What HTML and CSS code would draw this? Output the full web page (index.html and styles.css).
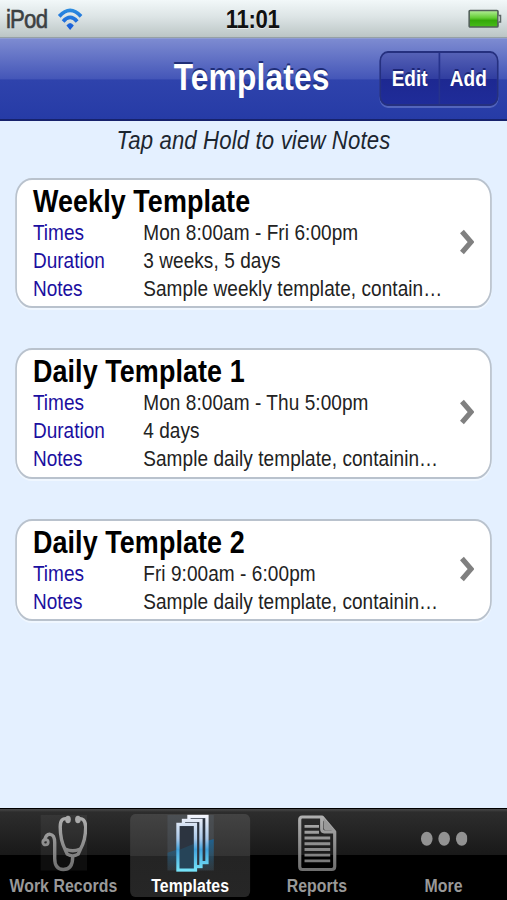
FILE: index.html
```html
<!DOCTYPE html>
<html lang="en">
<head>
<meta charset="utf-8">
<title>Templates</title>
<link rel="stylesheet" href="styles.css">
</head>
<body>
<div class="viewport">
<div class="screen">
  <header class="status">
    <div class="carrier">
      <span>iPod</span>
      <svg class="wifi" viewBox="0 0 26 22" preserveAspectRatio="none">
        <defs><linearGradient id="wf" x1="0" y1="0" x2="0" y2="22" gradientUnits="userSpaceOnUse"><stop offset="0" stop-color="#2d8fe0"/><stop offset="1" stop-color="#1557d8"/></linearGradient></defs>
        <g fill="none" stroke="url(#wf)" stroke-width="3.8"><path d="M1.8 8.4Q13 -3.6 24.2 8.4"/><path d="M5.8 13.4Q13 5.4 20.2 13.4"/></g>
        <path fill="url(#wf)" d="M9.2 17.6Q13 12.4 16.8 17.6L13 22Z"/>
      </svg>
    </div>
    <span class="clock">11:01</span>
    <div class="power"><svg class="battery" viewBox="0 0 34 20" preserveAspectRatio="none">
      <defs><linearGradient id="bt" x1="0" y1="0" x2="0" y2="1"><stop offset="0" stop-color="#b5ef9a"/><stop offset=".45" stop-color="#62cc33"/><stop offset=".6" stop-color="#35a80a"/><stop offset="1" stop-color="#48bd1a"/></linearGradient></defs>
      <rect x="1" y="1.5" width="29" height="16.5" rx="1" fill="url(#bt)" stroke="#53605a" stroke-width="1.7"/>
      <path d="M30.500 6.500h2.200v6.500h-2.200" fill="#b9c1c0" stroke="#5d6867" stroke-width="1.3"/>
    </svg></div>
  </header>

  <nav class="navbar">
    <h1>Templates</h1>
    <div class="actions"><button>Edit</button><button>Add</button></div>
  </nav>

  <main class="content">
    <p class="hint">Tap and Hold to view Notes</p>
    <section class="card">
      <div class="details">
        <h2>Weekly Template</h2>
        <dl>
          <dt>Times</dt><dd>Mon 8:00am - Fri 6:00pm</dd>
          <dt>Duration</dt><dd>3 weeks, 5 days</dd>
          <dt>Notes</dt><dd>Sample weekly template, contain…</dd>
        </dl>
      </div>
      <svg class="chevron" viewBox="0 0 15 26" preserveAspectRatio="none"><path d="M2.300 2.500L11.500 13L2.300 23.500" fill="none" stroke="#808080" stroke-width="5.200"/></svg>
    </section>
    <section class="card">
      <div class="details">
        <h2>Daily Template 1</h2>
        <dl>
          <dt>Times</dt><dd>Mon 8:00am - Thu 5:00pm</dd>
          <dt>Duration</dt><dd>4 days</dd>
          <dt>Notes</dt><dd>Sample daily template, containin…</dd>
        </dl>
      </div>
      <svg class="chevron" viewBox="0 0 15 26" preserveAspectRatio="none"><path d="M2.300 2.500L11.500 13L2.300 23.500" fill="none" stroke="#808080" stroke-width="5.200"/></svg>
    </section>
    <section class="card">
      <div class="details">
        <h2>Daily Template 2</h2>
        <dl>
          <dt>Times</dt><dd>Fri 9:00am - 6:00pm</dd>
          <dt>Notes</dt><dd>Sample daily template, containin…</dd>
        </dl>
      </div>
      <svg class="chevron" viewBox="0 0 15 26" preserveAspectRatio="none"><path d="M2.300 2.500L11.500 13L2.300 23.500" fill="none" stroke="#808080" stroke-width="5.200"/></svg>
    </section>
  </main>

  <footer class="tabbar">
    <div class="tab">
      <svg class="icon" viewBox="0 0 48 60" preserveAspectRatio="none">
        <defs><linearGradient id="gr" x1="0" y1="0" x2="0" y2="60" gradientUnits="userSpaceOnUse"><stop offset="0" stop-color="#b4b4b4"/><stop offset="1" stop-color="#6c6c6c"/></linearGradient></defs>
        <rect x="1" y="2" width="47" height="56" fill="#fff" opacity=".055"/>
        <g fill="none" stroke="url(#gr)" stroke-width="3.4" stroke-linecap="round">
          <path d="M28 6Q20.500 4 20.500 14Q20.500 27 25.500 37L27.500 41.500Q33 45 38.500 41.500L40.500 37Q46 27 46 14Q45.500 4 38 6"/>
          <path d="M26 36.500Q33 39.500 40 36.500"/>
          <path d="M33 44Q33 57 23.500 57Q15 57 15 46V30Q15 22 10.500 21.500Q6.500 21 5 27"/>
          <circle cx="5.800" cy="29.500" r="2.700" stroke-width="2.800"/>
        </g>
        <g fill="#aaa"><ellipse cx="28.300" cy="6.500" rx="2.800" ry="3.800"/><ellipse cx="38.200" cy="6.500" rx="2.800" ry="3.800"/></g>
      </svg>
      <span>Work Records</span>
    </div>
    <div class="tab selected">
      <svg class="icon" viewBox="0 0 48 60" preserveAspectRatio="none">
        <defs>
          <linearGradient id="bl" x1="0" y1="2" x2="0" y2="58" gradientUnits="userSpaceOnUse"><stop offset="0" stop-color="#f4f5fc"/><stop offset=".43" stop-color="#aac8e8"/><stop offset=".62" stop-color="#43a4dd"/><stop offset="1" stop-color="#75e3f8"/></linearGradient>
          <linearGradient id="bg" x1="0" y1="25" x2="0" y2="58" gradientUnits="userSpaceOnUse"><stop offset="0" stop-color="#126ba9" stop-opacity=".75"/><stop offset="1" stop-color="#17668d" stop-opacity=".05"/></linearGradient>
        </defs>
        <rect x="1" y="2" width="47" height="56" fill="#8eabc9" opacity=".13"/>
        <path d="M1 40Q22 33 48 26V58H1Z" fill="url(#bg)"/>
        <g fill="#2c3440" stroke="url(#bl)" stroke-width="3.300">
          <rect x="22.500" y="3.500" width="18" height="46.500"/>
          <rect x="17" y="7.500" width="17.500" height="46.500"/>
          <rect x="11.500" y="11.500" width="17.500" height="46"/>
        </g>
        <path d="M13 37L27.500 31V56H13Z" fill="#1e6487" opacity=".35"/>
      </svg>
      <span>Templates</span>
    </div>
    <div class="tab">
      <svg class="icon" viewBox="0 0 48 60" preserveAspectRatio="none">
        <g fill="none" stroke="url(#gr)" stroke-width="3.200" stroke-linejoin="round">
          <path d="M9 4H29L41.500 19V54Q41.500 57 38.500 57H9Q6.500 57 6.500 54V7Q6.500 4 9 4Z"/>
          <path d="M28.500 4V16Q28.500 19 31 19H41.500"/>
        </g>
        <path d="M30.500 5L41 17.500H33Q30.500 17.500 30.500 15Z" fill="#999"/>
        <g fill="url(#gr)"><path d="M11.300 12h14.500v2.800h-14.500zM11.300 18h14.500v2.800h-14.500zM11.300 23.800H37v2.800H11.300zM11.300 29.600H37v2.800H11.300zM11.300 35.400H37v2.800H11.300zM11.300 41.100H37v2.800H11.300zM11.300 46.900H37v2.800H11.300z"/></g>
      </svg>
      <span>Reports</span>
    </div>
    <div class="tab">
      <svg class="icon" viewBox="0 0 48 60" preserveAspectRatio="none"><g fill="#929292"><ellipse cx="6.800" cy="26" rx="5.800" ry="7"/><ellipse cx="24.200" cy="26" rx="5.800" ry="7"/><ellipse cx="41.800" cy="26" rx="5.800" ry="7"/></g></svg>
      <span>More</span>
    </div>
  </footer>
</div>
</div>
</body>
</html>
```
FILE: styles.css
```css
* { box-sizing: border-box; margin: 0; padding: 0; }
body { background: #e4f0ff; }
.viewport { width: 100%; height: 900px; overflow: hidden; }

.screen {
  width: 600px;
  height: 900px;
  transform: scaleX(.845);
  transform-origin: 0 0;
  display: flex;
  flex-direction: column;
  background: #e4f0ff;
  font-family: "Liberation Sans", Arial, Helvetica, sans-serif;
  color: #222;
}

.status {
  height: 38px;
  flex: none;
  display: grid;
  grid-template-columns: 1fr auto 1fr;
  align-items: center;
  padding: 0 6px 0 7px;
  background: linear-gradient(#f2f8f9, #dce4e5 45%, #bcc6c6 96%, #828e96);
  font-size: 26.25px;
  line-height: 36px;
}
.carrier { display: flex; align-items: center; gap: 12.5px; color: #3c4143; -webkit-text-stroke: .6px #3c4143; }
.carrier span { letter-spacing: -.9px; }
.wifi { width: 30px; height: 22px; }
.clock { font-weight: bold; color: #111; text-shadow: 0 1px 0 #fff9; letter-spacing: -.4px; margin-right: 3px; }
.power { display: flex; justify-content: flex-end; }
.battery { width: 40px; height: 20px; }

.navbar {
  height: 83px;
  flex: none;
  display: flex;
  align-items: center;
  justify-content: flex-end;
  gap: 59px;
  padding: 0 10px 4px 0;
  border-top: 1px solid #8f9cd3;
  border-bottom: 2px solid #16226c;
  background: linear-gradient(#7d8bd1, #4456b8 50%, #2f43ac 51%, #263ba6);
  color: #fff;
}
.navbar h1 { font-size: 37.5px; line-height: 44px; letter-spacing: .2px; text-shadow: 0 -2px 0 #1f2e78; }
.actions {
  display: flex;
  width: 141px;
  height: 55px;
  margin-top: 3px;
  border: 2px solid #25307f;
  border-radius: 10px;
  overflow: hidden;
  background: linear-gradient(#5561b6, #313ea0 50%, #1d2891 51%, #1f2c99);
  box-shadow: 0 2px 0 #5365bd;
}
.actions button {
  flex: 1;
  border: 0;
  background: none;
  color: #fff;
  font: bold 22.5px "Liberation Sans", Arial, sans-serif;
  text-shadow: 0 -2px 0 #1c2675;
}
.actions button + button { border-left: 2px solid #26338c; }

.content { flex: 1; padding: 0 18px; }
.hint { height: 56.5px; padding-top: 4px; text-align: center; font-size: 26.25px; line-height: 30px; font-style: italic; letter-spacing: .16px; color: #1c2630; }

.card {
  display: flex;
  align-items: center;
  justify-content: space-between;
  margin-bottom: 40.3px;
  padding: 4px 19px 3px 19px;
  border: 2px solid #b9c2cd;
  border-radius: 20px;
  background: #fff;
  box-shadow: 0 2px 0 #f0f7ff;
}
.details h2 { height: 35px; font-size: 31.875px; line-height: 34px; letter-spacing: .1px; color: #000; }
.details dl { display: grid; grid-template-columns: 130.5px auto; font-size: 22.5px; line-height: 28.125px; letter-spacing: .08px; }
.details dt { color: #1b0fa0; letter-spacing: 0; }
.chevron { width: 17.5px; height: 26px; flex: none; margin-bottom: 3px; }

.tabbar {
  height: 92px;
  flex: none;
  display: grid;
  grid-template-columns: repeat(4, 150px);
  padding-top: 5px;
  border-top: 1px solid #000;
  background: linear-gradient(#4a4a4a 0, #2d2d2d 3px, #191919 50%, #000 51%, #000);
}
.tab {
  height: 83px;
  display: flex;
  flex-direction: column;
  align-items: center;
  margin: 0 4px;
  color: #999;
  font-size: 18.75px;
  font-weight: bold;
}
.tab span { line-height: 22px; margin-top: 2.5px; white-space: nowrap; letter-spacing: .08px; }
.icon { width: 56.8px; height: 60px; margin-top: -1px; }
.selected { border-radius: 6px; background: linear-gradient(#434343, #333 50%, #242424 51%, #262626); color: #fff; }
```
